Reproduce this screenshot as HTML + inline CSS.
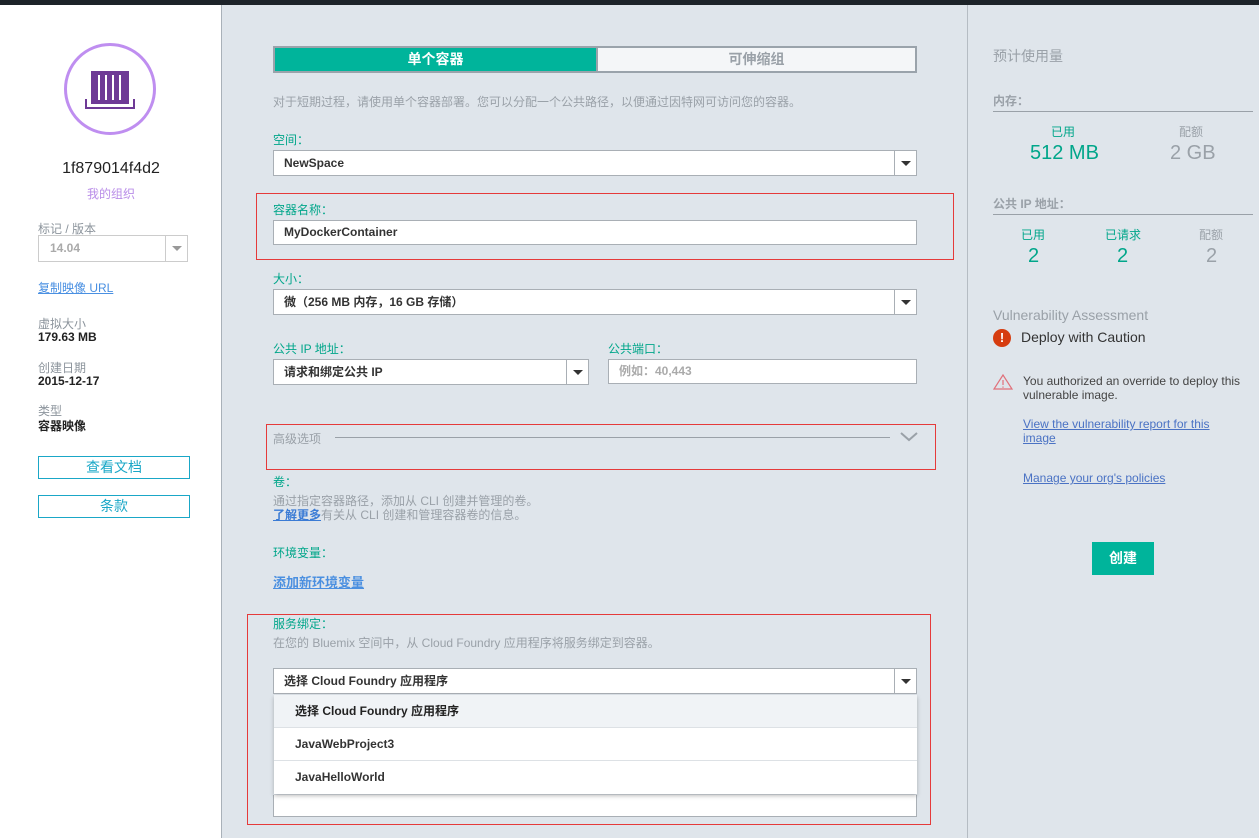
<!DOCTYPE html>
<html><head><meta charset="utf-8"><style>
*{margin:0;padding:0;box-sizing:border-box}
body{width:1259px;height:838px;overflow:hidden;background:#dfe5eb;font-family:"Liberation Sans","Noto Sans CJK SC",sans-serif;position:relative;font-size:12px}
.a{position:absolute}
.top{left:0;top:0;width:1259px;height:5px;background:#1d2329}
.left{left:0;top:5px;width:222px;height:833px;background:#fff;border-right:1px solid #a9b1b9}
.right{left:967px;top:5px;width:292px;height:833px;border-left:1px solid #b5bcc3;background:#dfe5eb}
.lab{color:#8c949c;font-size:12px}
.val{color:#222;font-size:12px;font-weight:bold}
.btn{border:1px solid #1aa7c7;color:#1aa7c7;text-align:center;font-size:14px;height:23px;line-height:21px}
.g{color:#00a68a;font-size:12px;font-weight:normal}
.inp{background:#fff;border:1px solid #a9afb5;height:26px;line-height:24px;padding-left:10px;font-size:12px;color:#333;font-weight:bold}
.arr{position:absolute;right:0;top:0;width:22px;height:24px;border-left:1px solid #a9afb5}
.arr:after{content:"";position:absolute;left:6px;top:10px;border-left:5px solid transparent;border-right:5px solid transparent;border-top:5px solid #333}
.red{border:1px solid #e53a3a}
.gr{color:#9aa1a8}
.link{color:#3a7bd5;text-decoration:underline}
</style></head><body>
<div class="a top"></div>
<div class="a left">
 <div class="a" style="left:64px;top:38px;width:92px;height:92px;border:3px solid #bf8ef0;border-radius:50%"></div>
 <svg class="a" style="left:85px;top:61px" width="50" height="50" viewBox="0 0 50 50"><rect x="6" y="5" width="38" height="33" fill="#6e3a96"/><g fill="#fff"><rect x="13" y="9" width="2" height="25"/><rect x="20" y="9" width="2" height="25"/><rect x="27" y="9" width="2" height="25"/><rect x="34" y="9" width="2" height="25"/></g><path d="M1 33v9h48v-9" fill="none" stroke="#6e3a96" stroke-width="2"/></svg>
 <div class="a" style="left:0;width:222px;top:155px;text-align:center;font-size:16px;color:#222">1f879014f4d2</div>
 <div class="a" style="left:0;width:222px;top:180px;text-align:center;font-size:12px;color:#b98de8">我的组织</div>
 <div class="a lab" style="left:38px;top:215px">标记 / 版本</div>
 <div class="a" style="left:38px;top:230px;width:150px;height:27px;border:1px solid #ccc;color:#aaa;font-weight:bold;padding-left:11px;line-height:25px">14.04<div style="position:absolute;right:0;top:0;width:22px;height:25px;border-left:1px solid #ccc"><div style="position:absolute;left:6px;top:10px;border-left:5px solid transparent;border-right:5px solid transparent;border-top:5px solid #999"></div></div></div>
 <div class="a link" style="left:38px;top:274px;color:#4a90e2">复制映像 URL</div>
 <div class="a lab" style="left:38px;top:310px">虚拟大小</div>
 <div class="a val" style="left:38px;top:325px">179.63 MB</div>
 <div class="a lab" style="left:38px;top:354px">创建日期</div>
 <div class="a val" style="left:38px;top:369px">2015-12-17</div>
 <div class="a lab" style="left:38px;top:397px">类型</div>
 <div class="a val" style="left:38px;top:412px">容器映像</div>
 <div class="a btn" style="left:38px;top:451px;width:152px">查看文档</div>
 <div class="a btn" style="left:38px;top:490px;width:152px">条款</div>
</div>

<div class="a" style="left:273px;top:46px;width:644px;height:27px;border:2px solid #9aa3ab;background:#f4f6f8">
 <div class="a" style="left:0;top:0;width:321px;height:23px;background:#00b49b;color:#fff;font-weight:bold;font-size:14px;text-align:center;line-height:23px">单个容器</div>
 <div class="a" style="left:321px;top:0;width:319px;height:23px;border-left:2px solid #9aa3ab;color:#9aa1a8;font-weight:bold;font-size:14px;text-align:center;line-height:23px">可伸缩组</div>
</div>
<div class="a gr" style="left:273px;top:93px">对于短期过程，请使用单个容器部署。您可以分配一个公共路径，以便通过因特网可访问您的容器。</div>
<div class="a g" style="left:273px;top:131px">空间：</div>
<div class="a inp" style="left:273px;top:150px;width:644px">NewSpace<div class="arr"></div></div>
<div class="a red" style="left:256px;top:193px;width:698px;height:67px"></div>
<div class="a g" style="left:273px;top:201px">容器名称：</div>
<div class="a inp" style="left:273px;top:220px;width:644px;height:25px;line-height:23px">MyDockerContainer</div>
<div class="a g" style="left:273px;top:270px">大小：</div>
<div class="a inp" style="left:273px;top:289px;width:644px">微（256 MB 内存，16 GB 存储）<div class="arr"></div></div>
<div class="a g" style="left:273px;top:340px">公共 IP 地址：</div>
<div class="a inp" style="left:273px;top:359px;width:316px">请求和绑定公共 IP<div class="arr"></div></div>
<div class="a g" style="left:608px;top:340px">公共端口：</div>
<div class="a inp" style="left:608px;top:359px;width:309px;color:#aaa;height:25px;line-height:23px">例如：40,443</div>

<div class="a red" style="left:266px;top:424px;width:670px;height:46px"></div>
<div class="a gr" style="left:273px;top:430px">高级选项</div>
<div class="a" style="left:335px;top:437px;width:555px;height:1px;background:#9aa1a8"></div>
<svg class="a" style="left:900px;top:432px" width="18" height="10"><path d="M1 1l8 7 8-7" fill="none" stroke="#9aa1a8" stroke-width="2"/></svg>
<div class="a g" style="left:273px;top:473px">卷：</div>
<div class="a gr" style="left:273px;top:492px">通过指定容器路径，添加从 CLI 创建并管理的卷。</div>
<div class="a gr" style="left:273px;top:506px"><span class="link" style="color:#3a7bd5;font-weight:bold">了解更多</span>有关从 CLI 创建和管理容器卷的信息。</div>
<div class="a g" style="left:273px;top:544px">环境变量：</div>
<div class="a link" style="left:273px;top:572px;font-weight:bold;font-size:13px;color:#4a8fe0">添加新环境变量</div>

<div class="a red" style="left:247px;top:614px;width:684px;height:211px"></div>
<div class="a g" style="left:273px;top:615px">服务绑定：</div>
<div class="a gr" style="left:273px;top:634px">在您的 Bluemix 空间中，从 Cloud Foundry 应用程序将服务绑定到容器。</div>
<div class="a inp" style="left:273px;top:668px;width:644px">选择 Cloud Foundry 应用程序<div class="arr"></div></div>
<div class="a" style="left:273px;top:795px;width:644px;height:22px;background:#fff;border:1px solid #a9afb5;border-top:none"></div>
<div class="a" style="left:274px;top:695px;width:643px;height:99px;background:#fff;box-shadow:0 2px 4px rgba(0,0,0,.25)">
 <div style="height:33px;line-height:33px;padding-left:21px;background:#f0f3f6;border-bottom:1px solid #dde1e5;font-weight:bold;color:#222">选择 Cloud Foundry 应用程序</div>
 <div style="height:33px;line-height:33px;padding-left:21px;border-bottom:1px solid #dde1e5;font-weight:bold;color:#333">JavaWebProject3</div>
 <div style="height:33px;line-height:33px;padding-left:21px;font-weight:bold;color:#333">JavaHelloWorld</div>
</div>

<div class="a right">
 <div class="a gr" style="left:25px;top:41px;font-size:14px">预计使用量</div>
 <div class="a gr" style="left:25px;top:87px;font-weight:bold">内存：</div>
 <div class="a" style="left:25px;top:106px;width:260px;height:1px;background:#9aa1a8"></div>
 <div class="a g" style="left:83px;top:118px">已用</div>
 <div class="a" style="left:62px;top:137px;font-size:20px;color:#00a68a">512 MB</div>
 <div class="a gr" style="left:211px;top:118px">配额</div>
 <div class="a gr" style="left:202px;top:137px;font-size:20px">2 GB</div>
 <div class="a gr" style="left:25px;top:190px;font-weight:bold">公共 IP 地址：</div>
 <div class="a" style="left:25px;top:209px;width:260px;height:1px;background:#9aa1a8"></div>
 <div class="a g" style="left:53px;top:221px">已用</div>
 <div class="a" style="left:60px;top:240px;font-size:20px;color:#00a68a">2</div>
 <div class="a g" style="left:137px;top:221px">已请求</div>
 <div class="a" style="left:149px;top:240px;font-size:20px;color:#00a68a">2</div>
 <div class="a gr" style="left:231px;top:221px">配额</div>
 <div class="a gr" style="left:238px;top:240px;font-size:20px">2</div>
 <div class="a gr" style="left:25px;top:302px;font-size:14px">Vulnerability Assessment</div>
 <div class="a" style="left:25px;top:324px;width:18px;height:18px;border-radius:50%;background:#d63c0f;color:#fff;font-weight:bold;text-align:center;line-height:18px;font-size:13px">!</div>
 <div class="a" style="left:53px;top:324px;font-size:14px;color:#333">Deploy with Caution</div>
 <svg class="a" style="left:25px;top:368px" width="20" height="18"><path d="M10 2L1 16h18z" fill="none" stroke="#e0707a" stroke-width="1.2"/><path d="M10 7v5M10 13.5v1.2" stroke="#e0707a" stroke-width="1.2"/></svg>
 <div class="a" style="left:55px;top:369px;width:232px;color:#444;line-height:14px">You authorized an override to deploy this vulnerable image.</div>
 <div class="a link" style="left:55px;top:412px;width:208px;line-height:14px;color:#4a72c4">View the vulnerability report for this image</div>
 <div class="a link" style="left:55px;top:466px;color:#4a72c4">Manage your org's policies</div>
 <div class="a" style="left:124px;top:537px;width:62px;height:33px;background:#00b49b;color:#fff;font-weight:bold;font-size:14px;text-align:center;line-height:33px">创建</div>
</div>
</body></html>
